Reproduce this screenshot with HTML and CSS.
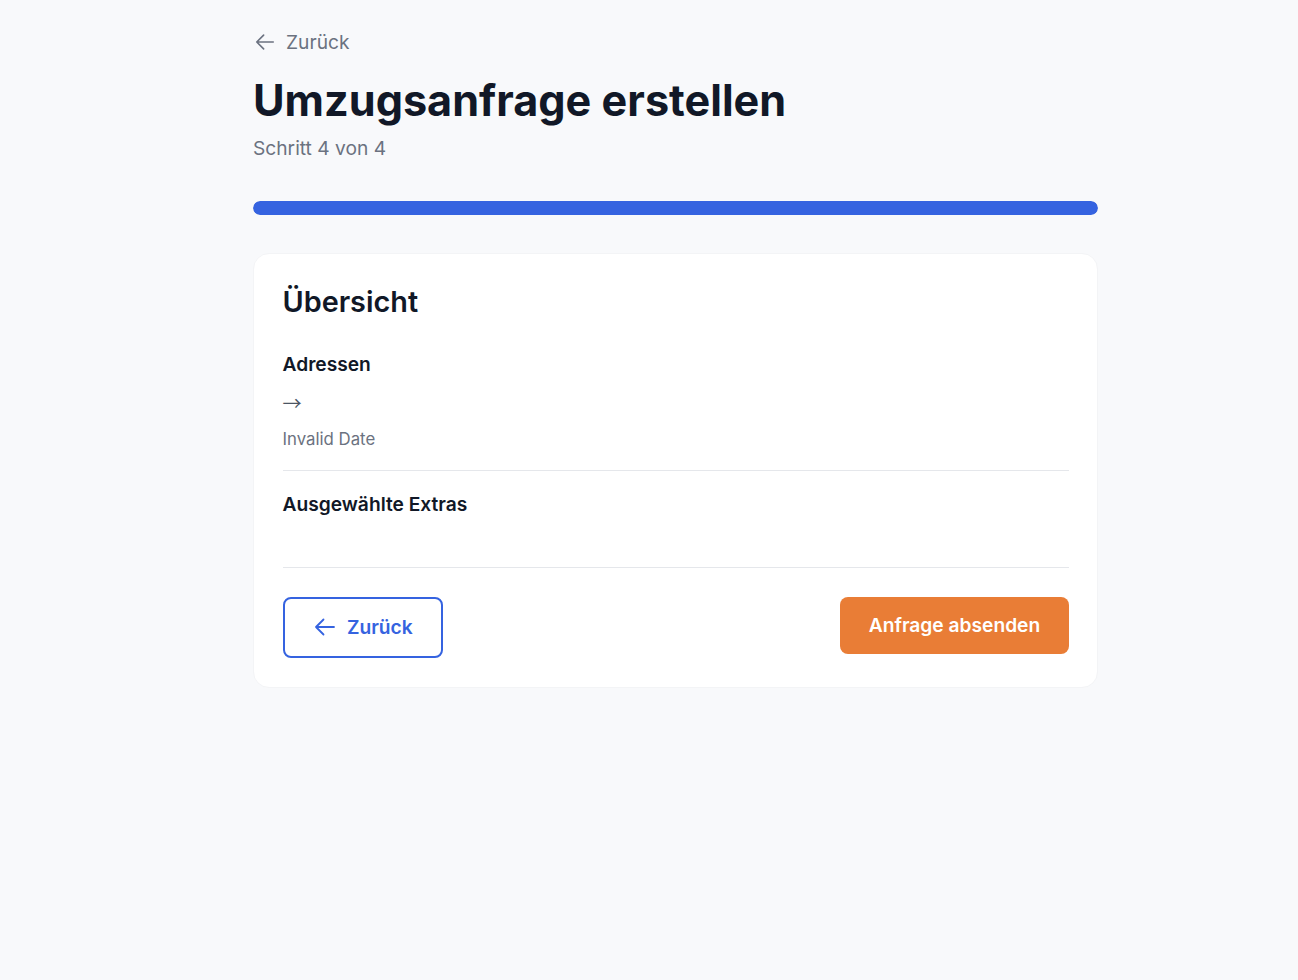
FILE: index.html
```html
<!DOCTYPE html>
<html lang="de">
<head>
<meta charset="utf-8">
<title>Umzugsanfrage erstellen</title>
<link rel="stylesheet" href="styles.css">
</head>
<body>
<main class="page">
  <a class="back-link" href="#">
    <svg class="icon" viewBox="0 0 24 24" fill="none" stroke="currentColor" stroke-width="1.8" stroke-linecap="round" stroke-linejoin="round"><path d="M10.5 19.5 3 12m0 0 7.5-7.5M3 12h18"/></svg>
    <span>Zurück</span>
  </a>
  <h1 class="title">Umzugsanfrage erstellen</h1>
  <p class="subtitle">Schritt 4 von 4</p>

  <div class="progress"><div class="progress-fill"></div></div>

  <section class="card">
    <h2 class="card-title">Übersicht</h2>

    <div class="block block-addresses">
      <h3 class="block-title">Adressen</h3>
      <p class="route"><span class="route-arrow">→</span></p>
      <p class="date">Invalid Date</p>
    </div>

    <div class="block block-extras">
      <h3 class="block-title">Ausgewählte Extras</h3>
    </div>

    <div class="actions">
      <button class="btn btn-outline" type="button">
        <svg class="icon" viewBox="0 0 24 24" fill="none" stroke="currentColor" stroke-width="1.8" stroke-linecap="round" stroke-linejoin="round"><path d="M10.5 19.5 3 12m0 0 7.5-7.5M3 12h18"/></svg>
        <span>Zurück</span>
      </button>
      <button class="btn btn-primary" type="button">Anfrage absenden</button>
    </div>
  </section>
</main>
</body>
</html>
```

FILE: styles.css
```css
* { box-sizing: border-box; }

html, body {
  margin: 0;
  padding: 0;
  background: #f8f9fb;
  font-family: Inter, "Noto Sans", "Liberation Sans", sans-serif;
  color: #111827;
}

.page {
  width: 845px;
  margin-left: 253px;
  padding-top: 28px;
  padding-bottom: 40px;
}

.back-link {
  display: inline-flex;
  align-items: center;
  gap: 10px;
  color: #6b7280;
  text-decoration: none;
  font-size: 19.2px;
  line-height: 28.8px;
}

.back-link .icon {
  width: 22px;
  height: 22px;
  margin-left: 1px;
}

.title {
  margin: 19px 0 0;
  font-size: 43.2px;
  line-height: 48px;
  font-weight: 700;
  color: #111827;
}

.subtitle {
  margin: 10px 0 0;
  font-size: 19.2px;
  line-height: 28.8px;
  color: #6b7280;
}

.progress {
  margin-top: 37.6px;
  height: 14.7px;
  border-radius: 999px;
  background: #e5e7eb;
  overflow: hidden;
}

.progress-fill {
  width: 100%;
  height: 100%;
  background: #3563e0;
  border-radius: 999px;
}

.card {
  margin-top: 37.3px;
  background: #ffffff;
  border: 1px solid #f3f4f6;
  border-radius: 16px;
  padding: 29.2px 28px 29px 28.5px;
}

.card-title {
  margin: 0;
  font-size: 28.8px;
  line-height: 38.4px;
  font-weight: 600;
  color: #111827;
}

.block {
  border-bottom: 1px solid #e5e7eb;
}

.block-addresses {
  margin-top: 29px;
  padding-bottom: 18.9px;
}

.block-extras {
  padding-top: 19.6px;
  padding-bottom: 47.6px;
}

.block-title {
  margin: 0;
  font-size: 19.2px;
  line-height: 28.8px;
  font-weight: 600;
  color: #111827;
}

.route {
  margin: 9.6px 0 0;
  font-size: 19.2px;
  line-height: 28.8px;
  color: #4b5563;
}

.route-arrow {
  font-family: "Noto Sans CJK SC", "DejaVu Sans", sans-serif;
}

.date {
  margin: 8.3px 0 0;
  font-size: 16.8px;
  line-height: 24px;
  color: #6b7280;
}

.actions {
  display: flex;
  justify-content: space-between;
  align-items: flex-start;
  padding-top: 29px;
}

.btn {
  display: inline-flex;
  align-items: center;
  justify-content: center;
  gap: 9.6px;
  font-family: inherit;
  font-size: 19.2px;
  line-height: 28.8px;
  font-weight: 600;
  border-radius: 8px;
  cursor: pointer;
}

.btn-outline {
  background: #ffffff;
  color: #3563e0;
  border: 2px solid #3563e0;
  padding: 14.1px 28.8px;
}

.btn-outline .icon {
  width: 24px;
  height: 24px;
}

.btn-primary {
  background: #e97d36;
  color: #ffffff;
  border: none;
  padding: 14.1px 28.8px;
}
```
